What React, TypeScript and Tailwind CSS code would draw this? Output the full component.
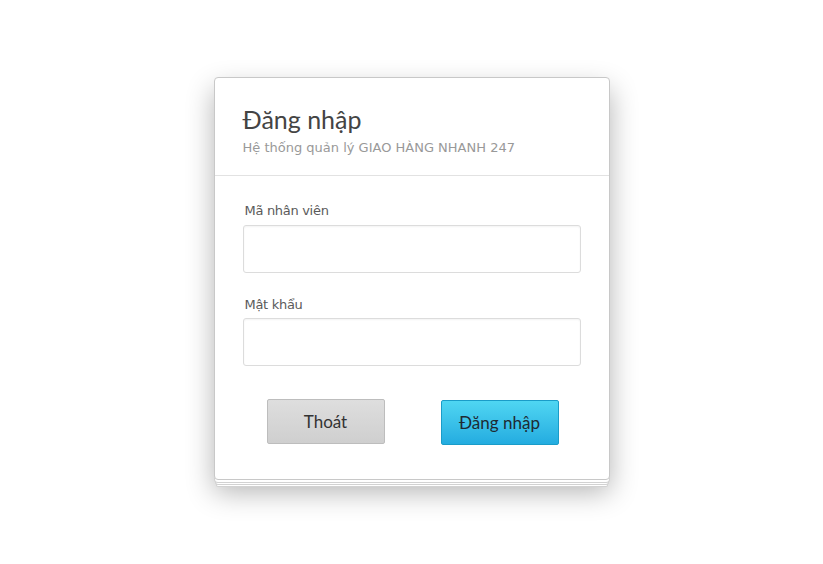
export default function App() {
  return (
    <div className="flex h-[564px] w-full justify-center bg-white pt-[77px] font-['Open_Sans',sans-serif]">
      <div className="h-fit w-[396px] rounded-[4px] border border-[#c8c8c8] bg-white shadow-[0_3px_0_-1px_#fff,0_3px_0_0_#d2d2d2,0_6px_0_-2px_#fff,0_6px_0_-1px_#d2d2d2,0_9px_0_-3px_#fff,0_9px_0_-2px_#d2d2d2,0_12px_28px_rgba(0,0,0,0.3)]">
        <div className="h-[98px] border-b border-[#e2e2e2] px-[28px] pt-[26px]">
          <h1 className="font-['Lato',sans-serif] text-[25px] leading-[30px] text-[#444]">Đăng nhập</h1>
          <p className="mt-[4px] font-['DejaVu_Sans',sans-serif] text-[13px] text-[#999]">
            Hệ thống quản lý GIAO HÀNG NHANH 247
          </p>
        </div>
        <form className="flex flex-col px-[28px] pt-[25px] pb-[34px]">
          <label className="pl-[2px] font-['DejaVu_Sans',sans-serif] text-[13px] tracking-[-0.3px] text-[#5a5a5a]">Mã nhân viên</label>
          <input className="mt-[4px] h-[48px] w-full rounded-[3px] border border-[#dcdcdc] bg-white shadow-[inset_0_1px_2px_rgba(0,0,0,0.05)]" />
          <label className="mt-[22px] pl-[2px] font-['DejaVu_Sans',sans-serif] text-[13px] tracking-[-0.3px] text-[#5a5a5a]">Mật khẩu</label>
          <input type="password" className="mt-[4px] h-[48px] w-full rounded-[3px] border border-[#dcdcdc] bg-white shadow-[inset_0_1px_2px_rgba(0,0,0,0.05)]" />
          <div className="mt-[33px] flex justify-between pl-[24px] pr-[22px]">
            <button type="button" className="h-[45px] w-[118px] rounded-[2px] border border-[#bdbdbd] bg-gradient-to-b from-[#dedede] to-[#cfcfcf] font-['Lato',sans-serif] text-[17px] text-[#333]">
              Thoát
            </button>
            <button type="button" className="mt-[1px] h-[45px] w-[118px] rounded-[2px] border border-[#1a9cc8] bg-gradient-to-b from-[#4fd6f2] to-[#23ace0] font-['Lato',sans-serif] text-[17px] text-[#1e2a33]">
              Đăng nhập
            </button>
          </div>
        </form>
      </div>
    </div>
  );
}
